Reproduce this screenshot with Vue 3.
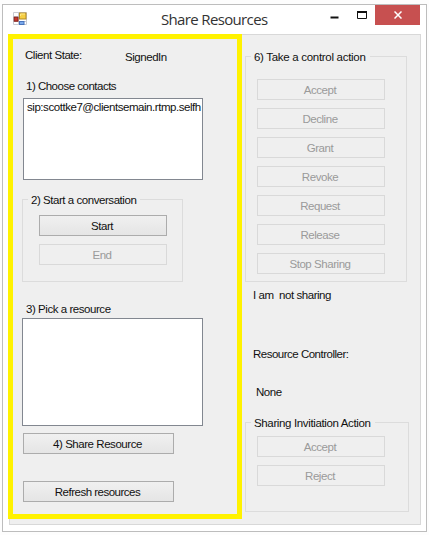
<script setup>
const controls = ['Accept', 'Decline', 'Grant', 'Revoke', 'Request', 'Release', 'Stop Sharing']
const invitations = ['Accept', 'Reject']
</script>

<template>
  <main class="window">
    <header class="titlebar">
      <svg class="app-icon" width="14" height="14" viewBox="0 0 14 14">
        <path d="M.5 .5h13v12H.5z M.5 4.500h13 M.5 9.500h13 M5.500 .5v12" fill="#fff" stroke="#c9cbd2" />
        <rect x="6.500" y="1" width="6.500" height="6" fill="#f5ce43" stroke="#b38a20" />
        <path d="M7.500 4V2h4.500" fill="none" stroke="#ffe98a" />
        <rect x="1.200" y="5.200" width="3.800" height="4" fill="#c9372d" stroke="#852018" />
        <rect x="6.500" y="9.500" width="4.500" height="3" fill="#7ba9ec" stroke="#4773bb" />
      </svg>
      <h1>Share Resources</h1>
      <svg class="min" width="9" height="3"><path d="M.5 1.500h8" stroke="#111" stroke-width="2" /></svg>
      <svg class="max" width="10" height="8"><path d="M.5 1.500V7.500h9v-6" fill="none" stroke="#111" /><path d="M0 1h10" stroke="#111" stroke-width="2" /></svg>
      <button class="close" aria-label="Close">
        <svg width="8" height="8"><path d="M.5 .5l7 7M7.500 .5l-7 7" stroke="#fff" stroke-width="1.500" /></svg>
      </button>
    </header>
    <div class="client">
      <section class="left">
        <div class="state"><span class="name">Client State:</span><span>SignedIn</span></div>
        <div class="label choose">1) Choose contacts</div>
        <div class="list contacts"><span>sip:scottke7@clientsemain.rtmp.selfh</span></div>
        <div class="group conversation">
          <div class="legend"><span>2) Start a conversation</span></div>
          <div class="stack">
            <button>Start</button>
            <button disabled>End</button>
          </div>
        </div>
        <div class="label pick">3) Pick a resource</div>
        <div class="list resources"></div>
        <button class="wide share">4) Share Resource</button>
        <button class="wide refresh">Refresh resources</button>
      </section>
      <section class="right">
        <div class="group control">
          <div class="legend"><span>6) Take a control action</span></div>
          <div class="stack">
            <button v-for="c in controls" :key="c" disabled>{{ c }}</button>
          </div>
        </div>
        <div class="label sharing">I am&nbsp; not sharing</div>
        <div class="label controller">Resource Controller:</div>
        <div class="label none">None</div>
        <div class="group invitation">
          <div class="legend"><span>Sharing Invitiation Action</span></div>
          <div class="stack">
            <button v-for="c in invitations" :key="c" disabled>{{ c }}</button>
          </div>
        </div>
      </section>
    </div>
  </main>
</template>

<style>
body { background: #fdfdfd; }
</style>

<style scoped>
* { box-sizing: border-box; }
.window {
  width: 425px;
  height: 528px;
  margin: 4px 0 0 2px;
  border: 1px solid #bdbdbd;
  background: #fff;
  font: 11.5px/14px "Liberation Sans", Arial, sans-serif;
  letter-spacing: -0.45px;
  color: #111;
  display: flex;
  flex-direction: column;
}
.titlebar { height: 29px; display: flex; align-items: flex-start; flex: none; }
.app-icon { margin: 7px 0 0 10px; }
h1 {
  margin: 3px 0 0 134px;
  width: 170px;
  font: 15px/22px "Open Sans", "Noto Sans", sans-serif;
  letter-spacing: -0.65px;
  color: #333;
  white-space: nowrap;
}
.min { margin: 11px 0 0 -1px; }
.max { margin: 6px 0 0 18px; }
.close {
  width: 45px;
  height: 20px;
  margin-left: 8px;
  background: #c75050;
  border: 0;
  display: flex;
  align-items: center;
  justify-content: center;
}
.client {
  width: 412px;
  height: 491px;
  margin-left: 6px;
  background: #efefef;
  border: 1px solid #d8d8d8;
  display: flex;
}
.left {
  width: 234px;
  height: 485px;
  margin: -1px 0 0 -2px;
  border: 5px solid #fff200;
  flex: none;
  display: flex;
  flex-direction: column;
  align-items: flex-start;
}
.right { margin-left: 3px; width: 164px; display: flex; flex-direction: column; }
.state { margin: 9px 0 0 12px; height: 17px; display: flex; }
.name { width: 100px; }
.state span + span { margin-top: 2px; }
.label { white-space: pre; height: 14px; }
.choose { margin: 14px 0 0 13px; letter-spacing: -0.5px; }
.list { background: #fff; border: 1px solid #828790; white-space: nowrap; overflow: hidden; padding: 1px 3px; }
.contacts { width: 180px; height: 82px; margin: 5px 0 0 10px; }
.group { border: 1px solid #dcdcdc; }
.legend { height: 14px; margin: -7px 0 0 5px; }
.legend span { display: inline-block; background: #efefef; padding: 0 4px 0 3px; white-space: nowrap; }
.conversation { width: 161px; height: 83px; margin: 19px 0 0 9px; }
.stack { display: flex; flex-direction: column; gap: 8px; }
.conversation .stack { margin: 8px 0 0 16px; }
button {
  font: inherit;
  letter-spacing: inherit;
  color: #111;
  width: 128px;
  height: 21px;
  padding: 0 2px 0 0;
  border: 1px solid #acacac;
  background: linear-gradient(#f0f0f0, #e5e5e5);
  text-align: center;
}
.titlebar .close { padding: 0; }
button:disabled { background: #efefef; border-color: #d9d9d9; color: #9a9a9a; }
.pick { margin: 20px 0 0 13px; }
.resources { width: 181px; height: 108px; margin: 2px 0 0 9px; }
.wide { width: 151px; margin-left: 10px; }
.share { margin-top: 7px; }
.refresh { margin-top: 27px; letter-spacing: -0.5px; }
.control { width: 162px; height: 226px; margin-top: 21px; }
.control .legend { letter-spacing: -0.3px; }
.right .stack { margin: 15px 0 0 11px; }
.sharing { margin: 6px 0 0 8px; }
.controller { margin: 45px 0 0 8px; letter-spacing: -0.5px; }
.none { margin: 24px 0 0 11px; }
.invitation { width: 164px; height: 90px; margin-top: 23px; }
.invitation .legend { letter-spacing: -0.36px; }
.right .invitation .stack { margin-top: 6px; }
</style>
